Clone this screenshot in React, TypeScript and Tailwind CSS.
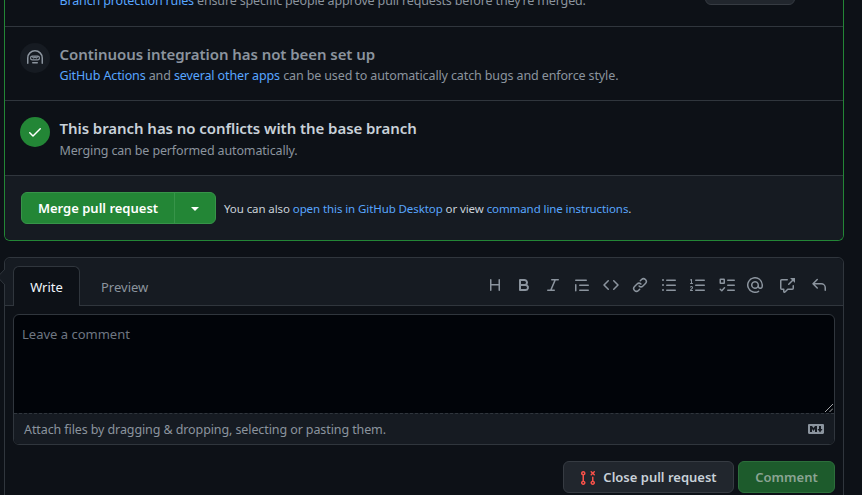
import React from 'react';

const paths: Record<string, string> = {
  heading: 'M3.75 2a.75.75 0 01.75.75V7h7V2.75a.75.75 0 011.5 0v10.5a.75.75 0 01-1.5 0V8.5h-7v4.75a.75.75 0 01-1.5 0V2.75A.75.75 0 013.75 2z',
  bold: 'M4 2a1 1 0 00-1 1v10a1 1 0 001 1h5.5a3.5 3.5 0 001.852-6.47A3.5 3.5 0 008.5 2H4zm4.5 5a1.5 1.5 0 100-3H5v3h3.5zM5 9v3h4.5a1.5 1.5 0 000-3H5z',
  italic: 'M6 2.75A.75.75 0 016.75 2h6.5a.75.75 0 010 1.5h-2.505l-3.858 9H9.25a.75.75 0 010 1.5h-6.5a.75.75 0 010-1.5h2.505l3.858-9H6.75A.75.75 0 016 2.75z',
  quote: 'M1.75 2.5a.75.75 0 000 1.5h10.5a.75.75 0 000-1.5H1.75zm4 5a.75.75 0 000 1.5h8.5a.75.75 0 000-1.5h-8.5zm0 5a.75.75 0 000 1.5h8.5a.75.75 0 000-1.5h-8.5zM2.5 7.75a.75.75 0 00-1.5 0v6a.75.75 0 001.5 0v-6z',
  code: 'M4.72 3.22a.75.75 0 011.06 1.06L2.06 8l3.72 3.72a.75.75 0 11-1.06 1.06L.47 8.53a.75.75 0 010-1.06l4.25-4.25zm6.56 0a.75.75 0 10-1.06 1.06L13.94 8l-3.72 3.72a.75.75 0 101.06 1.06l4.25-4.25a.75.75 0 000-1.06l-4.25-4.25z',
  link: 'M7.775 3.275a.75.75 0 001.06 1.06l1.25-1.25a2 2 0 112.83 2.83l-2.5 2.5a2 2 0 01-2.83 0 .75.75 0 00-1.06 1.06 3.5 3.5 0 004.95 0l2.5-2.5a3.5 3.5 0 00-4.95-4.95l-1.25 1.25zm-4.69 9.64a2 2 0 010-2.83l2.5-2.5a2 2 0 012.83 0 .75.75 0 001.06-1.06 3.5 3.5 0 00-4.95 0l-2.5 2.5a3.5 3.5 0 004.95 4.95l1.25-1.25a.75.75 0 00-1.06-1.06l-1.25 1.25a2 2 0 01-2.83 0z',
  ul: 'M2 4a1 1 0 100-2 1 1 0 000 2zm3.75-1.5a.75.75 0 000 1.5h8.5a.75.75 0 000-1.5h-8.5zm0 5a.75.75 0 000 1.5h8.5a.75.75 0 000-1.5h-8.5zm0 5a.75.75 0 000 1.5h8.5a.75.75 0 000-1.5h-8.5zM3 8a1 1 0 11-2 0 1 1 0 012 0zm-1 6a1 1 0 100-2 1 1 0 000 2z',
  ol: 'M2.003 2.5a.5.5 0 00-.723-.447l-1.003.5a.5.5 0 00.446.895l.28-.14V6H.5a.5.5 0 000 1h2.006a.5.5 0 100-1h-.503V2.5zM5 3.25a.75.75 0 01.75-.75h8.5a.75.75 0 010 1.5h-8.5A.75.75 0 015 3.25zm0 5a.75.75 0 01.75-.75h8.5a.75.75 0 010 1.5h-8.5A.75.75 0 015 8.25zm0 5a.75.75 0 01.75-.75h8.5a.75.75 0 010 1.5h-8.5a.75.75 0 01-.75-.75zM.924 10.32l.003-.004a.851.851 0 01.144-.153A.66.66 0 011.5 10c.195 0 .306.068.374.146a.57.57 0 01.128.376c0 .453-.269.682-.8 1.078l-.035.025C.692 11.98 0 12.495 0 13.5a.5.5 0 00.5.5h2.003a.5.5 0 000-1H1.146c.132-.197.351-.372.654-.597l.047-.035c.47-.35 1.156-.858 1.156-1.845 0-.365-.118-.744-.377-1.038-.268-.303-.658-.484-1.126-.484-.48 0-.84.202-1.068.392a1.858 1.858 0 00-.348.384l-.007.011-.002.004-.001.002-.001.001a.5.5 0 00.851.525z',
  mention: 'M4.75 2.37a6.5 6.5 0 006.5 11.26.75.75 0 01.75 1.298 8 8 0 113.994-7.273.754.754 0 01.006.095v1.5a2.75 2.75 0 01-5.072 1.475A4 4 0 1112 8v1.25a1.25 1.25 0 002.5 0V7.867a6.5 6.5 0 00-9.75-5.496V2.37zM10.5 8a2.5 2.5 0 10-5 0 2.5 2.5 0 005 0z',
  crossRef: 'M16 1.25v4.146a.25.25 0 01-.427.177L14.03 4.03l-3.75 3.75a.75.75 0 11-1.06-1.06l3.75-3.75-1.543-1.543A.25.25 0 0111.604 1h4.146a.25.25 0 01.25.25zM2.75 3.5a.25.25 0 00-.25.25v7.5c0 .138.112.25.25.25h2a.75.75 0 01.75.75v2.19l2.72-2.72a.75.75 0 01.53-.22h4.5a.25.25 0 00.25-.25v-2.5a.75.75 0 111.5 0v2.5A1.75 1.75 0 0113.25 13H9.06l-2.573 2.573A1.457 1.457 0 014 14.543V13H2.75A1.75 1.75 0 011 11.25v-7.5C1 2.784 1.784 2 2.75 2h5.5a.75.75 0 010 1.5h-5.5z',
  reply: 'M6.78 1.97a.75.75 0 010 1.06L3.81 6h6.44A4.75 4.75 0 0115 10.75v2.5a.75.75 0 01-1.5 0v-2.5a3.25 3.25 0 00-3.25-3.25H3.81l2.97 2.97a.75.75 0 11-1.06 1.06L1.47 7.28a.75.75 0 010-1.06l4.25-4.25a.75.75 0 011.06 0z',
  markdown: 'M14.85 3H1.15C.52 3 0 3.52 0 4.15v7.69C0 12.48.52 13 1.15 13h13.69c.64 0 1.15-.52 1.15-1.15v-7.7C16 3.52 15.48 3 14.85 3zM9 11H7V8L5.5 9.92 4 8v3H2V5h2l1.5 2L7 5h2v6zm2.99.5L9.5 8H11V5h2v3h1.5l-2.51 3.5z',
  prClosed: 'M10.72 1.227a.75.75 0 011.06 0l.97.97.97-.97a.75.75 0 111.06 1.061l-.97.97.97.97a.75.75 0 01-1.06 1.06l-.97-.97-.97.97a.75.75 0 11-1.06-1.06l.97-.97-.97-.97a.75.75 0 010-1.06zM12.75 6.5a.75.75 0 00-.75.75v3.378a2.251 2.251 0 101.5 0V7.25a.75.75 0 00-.75-.75zm0 5.5a.75.75 0 100 1.5.75.75 0 000-1.5zM2.5 3.25a.75.75 0 111.5 0 .75.75 0 01-1.5 0zM3.25 1a2.25 2.25 0 00-.75 4.372v5.256a2.251 2.251 0 101.5 0V5.372A2.25 2.25 0 003.25 1zm0 11a.75.75 0 100 1.5.75.75 0 000-1.5z',
  check: 'M13.78 4.22a.75.75 0 010 1.06l-7.25 7.25a.75.75 0 01-1.06 0L2.22 9.28a.75.75 0 011.06-1.06L6 10.94l6.72-6.72a.75.75 0 011.06 0z',
};

function Icon({ name, className = '' }: { name: string; className?: string }) {
  return (
    <svg viewBox="0 0 16 16" className={`size-4 shrink-0 fill-current ${className}`}>
      <path fillRule="evenodd" d={paths[name]} />
    </svg>
  );
}

function TaskList() {
  return (
    <svg viewBox="0 0 16 16" className="-mr-px size-4 shrink-0" fill="none" stroke="currentColor" strokeWidth="1.5" strokeLinecap="round" strokeLinejoin="round">
      <rect x="1.25" y="2.25" width="4" height="4" rx=".3" />
      <path d="M8.75 3.25h6.5M8.75 8.25h6.5M8.75 13.25h6.5M1.2 12.2l1.6 1.5 2.7-2.9" />
    </svg>
  );
}

function Hubot() {
  return (
    <svg viewBox="0 0 16 16" className="size-4" fill="none" stroke="currentColor" strokeWidth="1.5" strokeLinecap="round">
      <path d="M.75 13.25V8a7.25 7.25 0 0114.5 0v5.25" />
      <path d="M5.75 12.75h4.5" />
      <rect x="3.6" y="6.1" width="8.8" height="3.8" rx="1.7" strokeWidth="1.2" />
      <path d="M5.4 6.9l1.3 1.2 1.3-1.2 1.3 1.2 1.3-1.2" strokeWidth="1.1" />
    </svg>
  );
}

function Link({ children }: { children: React.ReactNode }) {
  return <a className="text-[#58a6ff]">{children}</a>;
}

const tools = ['heading', 'bold', 'italic', 'quote', 'code', 'link', 'ul', 'ol'];

export default function App() {
  return (
    <div className="h-[495px] w-[862px] overflow-hidden bg-[#0d1117] pl-1 font-['Noto_Sans','Open_Sans',sans-serif] text-[13px] text-[#8b949e]">
      <section className="flex h-[241px] w-[840px] flex-col overflow-hidden rounded-b-md border border-t-0 border-[#238636]">
        <div className="flex h-[27px] shrink-0 items-start border-b border-[#30363d] pl-[54.5px]">
          <p className="-mt-2 text-[12.5px] leading-[18px] tracking-[-0.15px] whitespace-nowrap">
            <Link>Branch protection rules</Link> ensure specific people approve pull requests before they’re merged.
          </p>
          <div className="-mt-5 mr-12 ml-auto h-[25px] w-[90px] rounded-md border border-[#363b42] bg-[#21262d]" />
        </div>
        <div className="flex h-[74px] shrink-0 gap-[9.5px] border-b border-[#30363d] pt-4 pl-[15px]">
          <div className="flex size-[30px] items-center justify-center rounded-full bg-[#161b22]">
            <Hubot />
          </div>
          <div className="-mt-px">
            <h3 className="h-[25px] text-[15px] leading-6 font-semibold tracking-[-0.06px] whitespace-nowrap">Continuous integration has not been set up</h3>
            <p className="text-[12.5px] leading-[18px] tracking-[-0.12px] whitespace-nowrap">
              <Link>GitHub Actions</Link> and <Link>several other apps</Link> can be used to automatically catch bugs and enforce style.
            </p>
          </div>
        </div>
        <div className="flex h-[75px] shrink-0 gap-[9.5px] border-b border-[#30363d] pt-4 pl-[15px]">
          <div className="flex size-[30px] items-center justify-center rounded-full bg-[#238636] text-white">
            <Icon name="check" />
          </div>
          <div className="-mt-px">
            <h3 className="h-[26px] text-[15px] leading-6 font-semibold tracking-[-0.06px] whitespace-nowrap text-[#c9d1d9]">This branch has no conflicts with the base branch</h3>
            <p className="text-[12.5px] leading-[18px] tracking-[-0.14px] whitespace-nowrap">Merging can be performed automatically.</p>
          </div>
        </div>
        <div className="flex flex-1 items-center bg-[#161b22] pl-4">
          <div className="flex h-8 w-[195px] overflow-hidden rounded-md border border-[#379449] bg-[#238636] text-white">
            <button className="w-[153px] border-r border-[#379449] pt-px font-semibold whitespace-nowrap">Merge pull request</button>
            <span className="flex flex-1 items-center justify-center pt-px">
              <span className="border-x-4 border-t-4 border-x-transparent border-t-white" />
            </span>
          </div>
          <p className="mt-0.5 ml-2 text-[11.5px] tracking-[-0.09px] whitespace-nowrap text-[#c9d1d9]">
            You can also <Link>open this in GitHub Desktop</Link> or view <Link>command line instructions</Link>.
          </p>
        </div>
      </section>

      <section className="relative mt-4 h-[260px] w-[840px] rounded-t-md border border-[#30363d]">
        <svg viewBox="0 0 8 16" className="absolute top-[11px] -left-2 h-4 w-2 fill-[#161b22] stroke-[#30363d]">
          <path d="M8 0L.5 8 8 16" />
        </svg>
        <div className="flex h-12 items-end rounded-t-md border-b border-[#30363d] bg-[#161b22] pl-2">
          <div className="-mb-px flex h-10 w-[67px] items-center justify-center rounded-t-md border border-b-0 border-[#30363d] bg-[#0d1117] pt-[3px] text-[#f0f6fc]">Write</div>
          <div className="ml-[21px] flex h-10 items-center pt-[5px]">Preview</div>
          <div className="mr-4 ml-auto flex h-10 items-center gap-[13px]">
            {tools.map((t) => (
              <Icon key={t} name={t} />
            ))}
            <TaskList />
            <Icon name="mention" />
            <Icon name="crossRef" className="ml-[3px]" />
            <Icon name="reply" className="ml-[3px]" />
          </div>
        </div>
        <div className="mt-2 ml-2 flex h-[131px] w-[822px] flex-col overflow-hidden rounded-md border border-[#30363d] bg-[#010409]">
          <div className="flex flex-1 items-end justify-between">
            <p className="self-start pt-2.5 pl-2 leading-[18px] text-[#6e7681]">Leave a comment</p>
            <svg viewBox="0 0 8 8" className="mr-px mb-px size-2" stroke="#b6b8ba" strokeWidth=".9">
              <path d="M0 8L8 0M4.5 8L8 4.5" />
            </svg>
          </div>
          <div className="flex h-[31px] items-center justify-between border-t border-dashed border-[#30363d] bg-[#161b22] pr-2.5 pl-2.5">
            <p className="pt-0.5 text-[12.5px] tracking-[-0.1px]">Attach files by dragging &amp; dropping, selecting or pasting them.</p>
            <Icon name="markdown" />
          </div>
        </div>
        <div className="mt-4 mr-2 flex justify-end gap-1 font-semibold whitespace-nowrap">
          <button className="flex h-8 w-[171px] items-center justify-center gap-[7px] rounded-md border border-[#363b42] bg-[#21262d] text-[#c9d1d9]">
            <Icon name="prClosed" className="mt-px text-[#f85149]" />
            <span className="pt-px">Close pull request</span>
          </button>
          <button className="h-8 w-[97px] rounded-md border border-[#2c6f3b] bg-[#1d5b2c] pt-px text-[#8ba493]">Comment</button>
        </div>
      </section>
    </div>
  );
}
